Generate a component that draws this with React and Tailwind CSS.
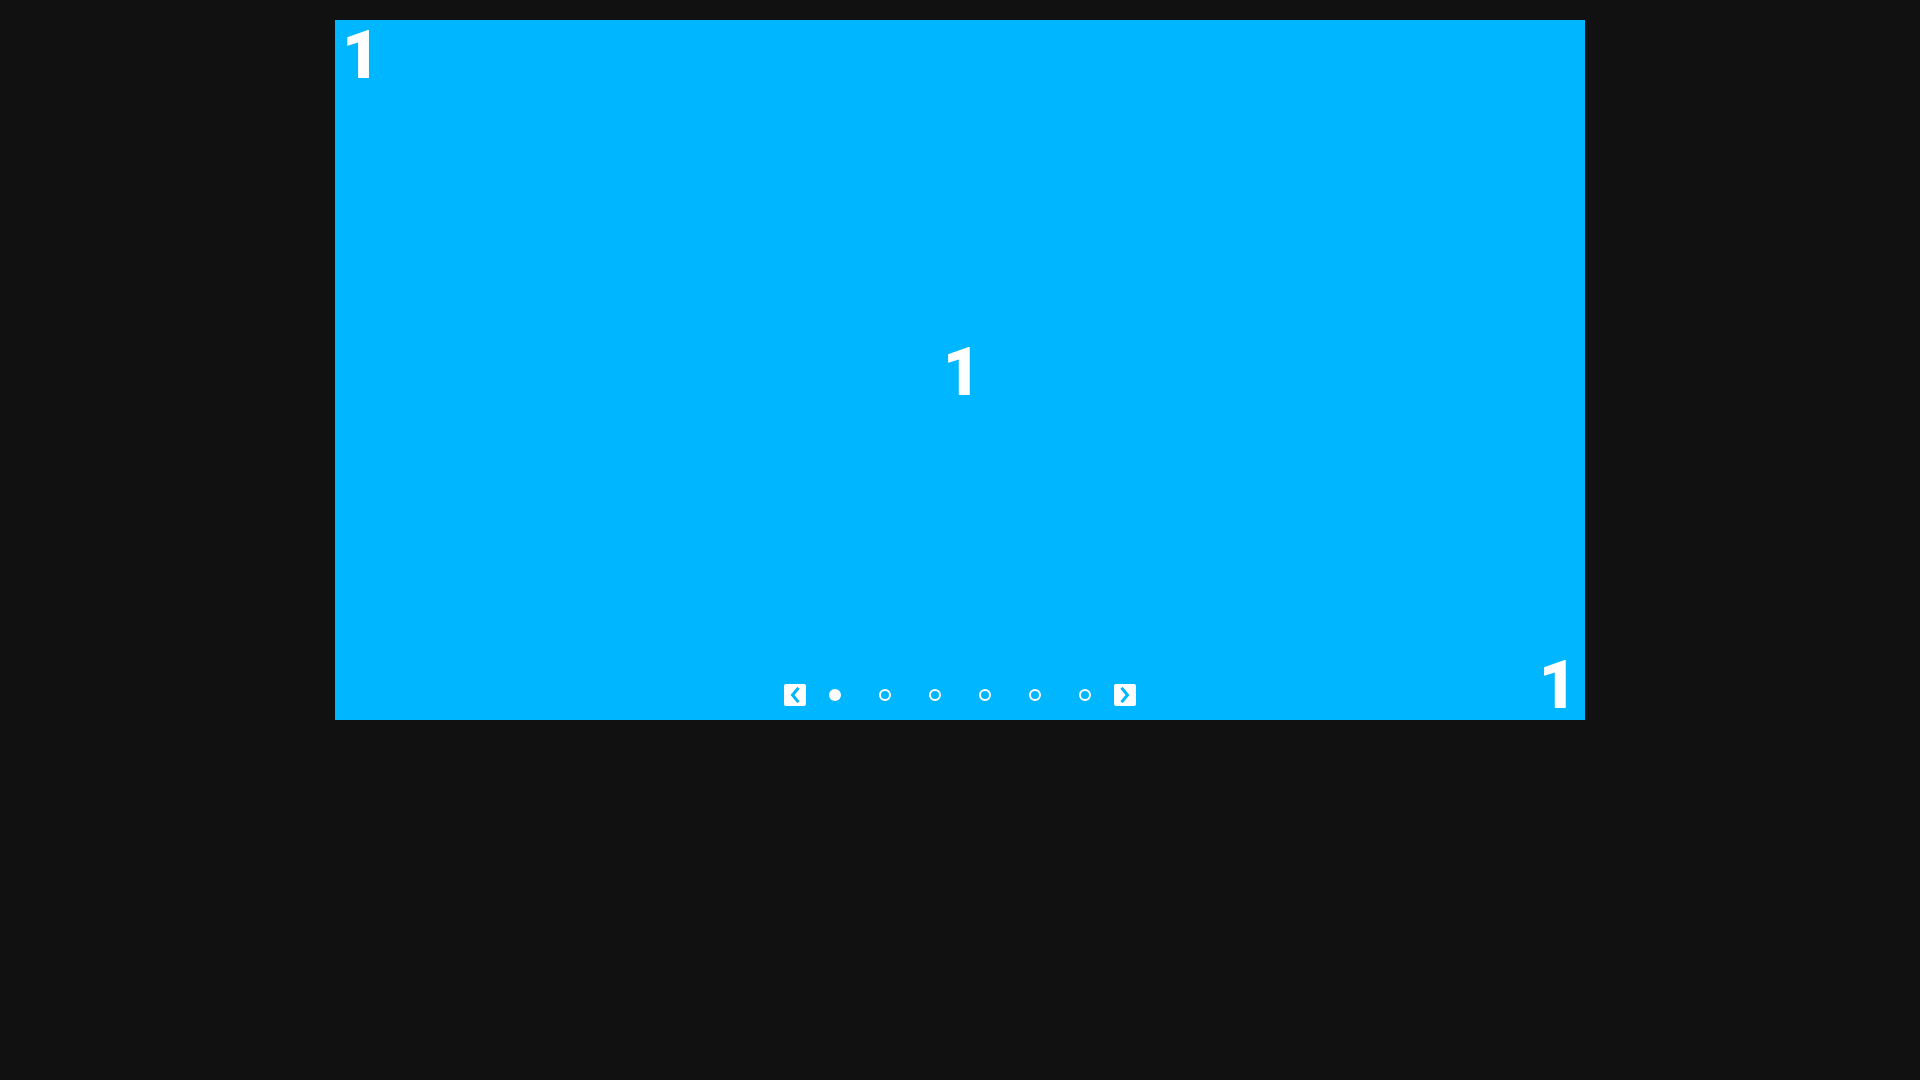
// Slider - single slide with corner labels and dot pagination
function Chevron({ dir }) {
  return (
    <svg width="12" height="16" viewBox="0 0 12 16" fill="none">
      <path
        d={dir === 'left' ? 'M8.5 2 L3.5 8 L8.5 14' : 'M3.5 2 L8.5 8 L3.5 14'}
        stroke="#00b7ff"
        strokeWidth="3"
        strokeLinecap="square"
      />
    </svg>
  );
}

export default function App() {
  const dots = [0, 1, 2, 3, 4, 5];
  const active = 0;

  return (
    <div className="min-h-screen w-full bg-[#111111] pt-[20px] font-['Roboto',sans-serif]">
      <div className="mx-auto flex h-[700px] w-[1250px] flex-col bg-[#00b7ff] text-white">
        <div className="flex h-[90px] items-start pl-[7px] pt-[3px] text-[66px] font-black leading-none">
          <span>1</span>
        </div>

        <div className="flex flex-1 items-center justify-center text-[66px] font-black leading-none">
          <span className="mt-[5px] pl-[4px]">1</span>
        </div>

        <div className="grid h-[90px] grid-cols-[1fr_auto_1fr]">
          <div />
          <div className="mb-[14px] flex items-center self-end">
            <button className="mr-[4px] flex h-[22px] w-[22px] items-center justify-center rounded-[2px] bg-white">
              <Chevron dir="left" />
            </button>
            {dots.map((d) => (
              <div key={d} className="flex w-[50px] justify-center">
                <span
                  className={
                    d === active
                      ? 'block h-[12px] w-[12px] rounded-full bg-white'
                      : 'block h-[12px] w-[12px] rounded-full border-2 border-white'
                  }
                />
              </div>
            ))}
            <button className="ml-[4px] flex h-[22px] w-[22px] items-center justify-center rounded-[2px] bg-white">
              <Chevron dir="right" />
            </button>
          </div>
          <div className="mb-[1px] self-end justify-self-end pr-[8px] text-[66px] font-black leading-none">
            1
          </div>
        </div>
      </div>
    </div>
  );
}
